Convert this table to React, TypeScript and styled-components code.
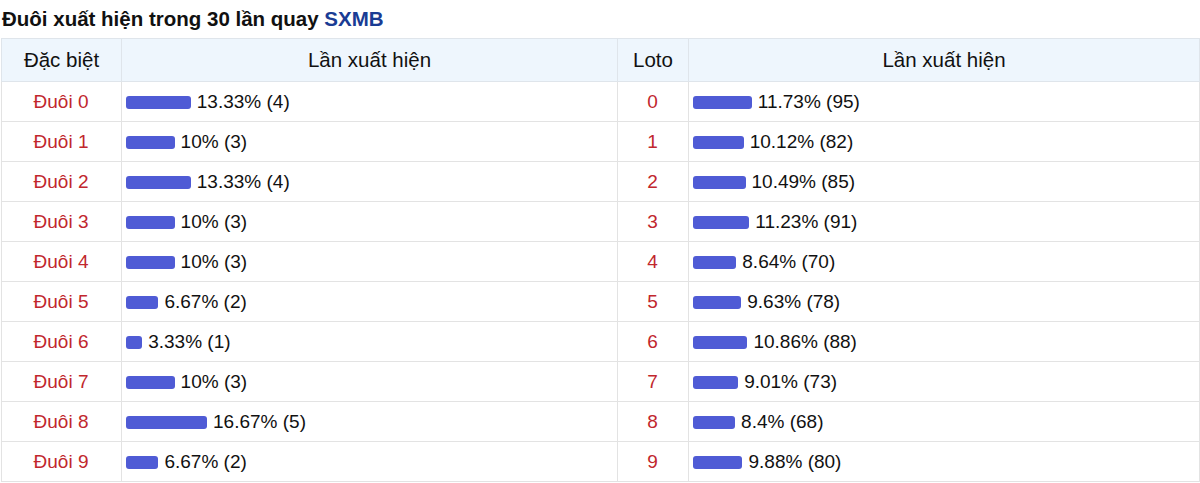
import React from "react";
import styled, { createGlobalStyle } from "styled-components";

const Global = createGlobalStyle`
  html, body { margin: 0; padding: 0; background: #fff; }
  body { font-family: Arial, "Liberation Sans", Helvetica, sans-serif; color: #222; }
`;

const Page = styled.div`
  padding: 0 2px 0 1px;
`;

const Title = styled.h2`
  margin: 0;
  height: 38px;
  display: flex;
  align-items: center;
  padding-left: 1px;
  font-size: 20.5px;
  font-weight: 700;
  color: #111;
`;

const Brand = styled.span`
  color: #1a3c94;
`;

const Table = styled.table`
  width: 1198px;
  border-collapse: collapse;
  table-layout: fixed;
  font-size: 19px;
`;

const Th = styled.th`
  height: 42px;
  padding: 0 4px;
  background: #eef6fd;
  border: 1px solid #dfe5eb;
  font-weight: 400;
  font-size: 20.5px;
  color: #111;
  text-align: center;
  vertical-align: middle;
`;

const Td = styled.td<{ $center?: boolean }>`
  height: 39px;
  padding: 0 5px 0 4px;
  border: 1px solid #e3e3e3;
  text-align: ${(p) => (p.$center ? "center" : "left")};
  vertical-align: middle;
  white-space: nowrap;
`;

const Label = styled.span`
  color: #c1272d;
`;

const Bar = styled.span`
  display: inline-block;
  height: 13px;
  background: #4f5bd5;
  border-radius: 3px;
  vertical-align: -1px;
  margin-right: 6px;
`;

const Value = styled.span`
  color: #111;
`;

const special = [
  [13.33, 4], [10, 3], [13.33, 4], [10, 3], [10, 3],
  [6.67, 2], [3.33, 1], [10, 3], [16.67, 5], [6.67, 2],
];
const loto = [
  [11.73, 95], [10.12, 82], [10.49, 85], [11.23, 91], [8.64, 70],
  [9.63, 78], [10.86, 88], [9.01, 73], [8.4, 68], [9.88, 80],
];

const StatCell = ({ pct, count }: { pct: number; count: number }) => (
  <Td>
    <Bar style={{ width: `${pct}%` }} />
    <Value>
      {pct}% ({count})
    </Value>
  </Td>
);

export default function App() {
  return (
    <Page>
      <Global />
      <Title>
        Đuôi xuất hiện trong 30 lần quay&nbsp;<Brand>SXMB</Brand>
      </Title>
      <Table>
        <colgroup>
          <col style={{ width: 120 }} />
          <col style={{ width: 496 }} />
          <col style={{ width: 71 }} />
          <col style={{ width: 511 }} />
        </colgroup>
        <thead>
          <tr>
            <Th>Đặc biệt</Th>
            <Th>Lần xuất hiện</Th>
            <Th>Loto</Th>
            <Th>Lần xuất hiện</Th>
          </tr>
        </thead>
        <tbody>
          {special.map(([p, c], i) => (
            <tr key={i}>
              <Td $center>
                <Label>Đuôi {i}</Label>
              </Td>
              <StatCell pct={p} count={c} />
              <Td $center>
                <Label>{i}</Label>
              </Td>
              <StatCell pct={loto[i][0]} count={loto[i][1]} />
            </tr>
          ))}
        </tbody>
      </Table>
    </Page>
  );
}
